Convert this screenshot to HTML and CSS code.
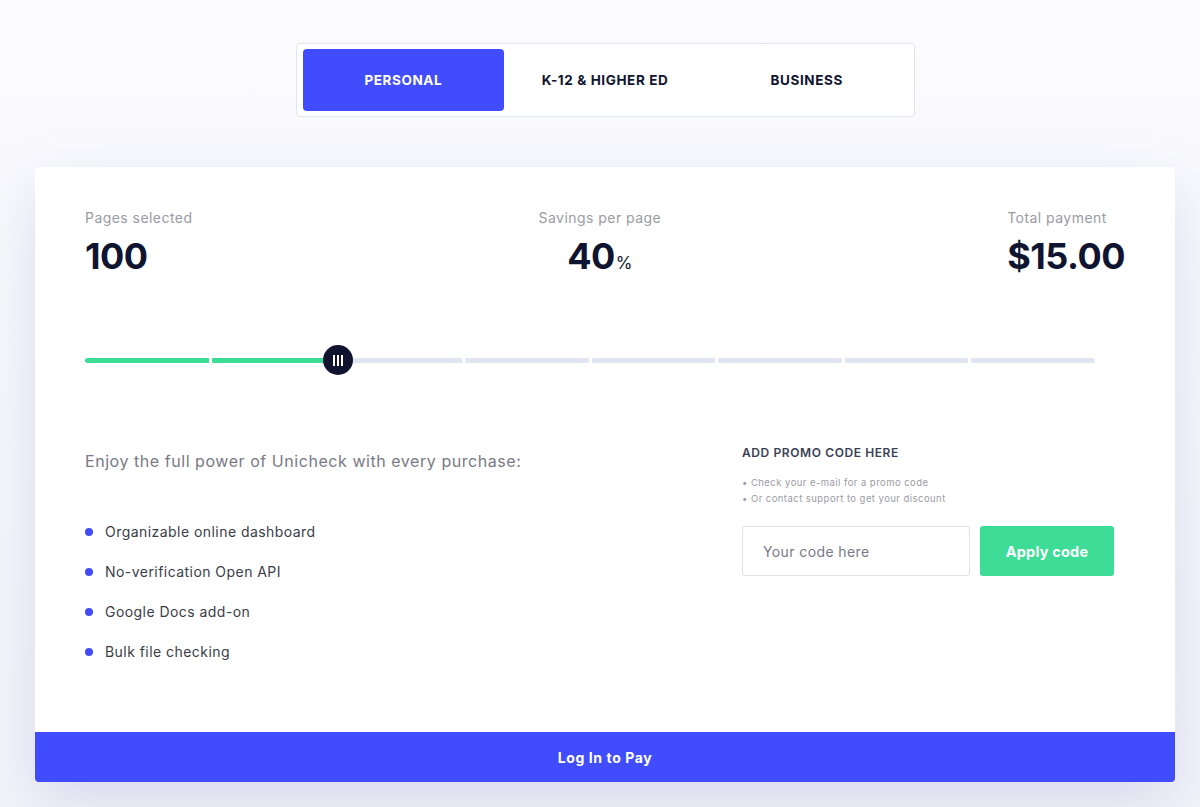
FILE: index.html
```html
<!DOCTYPE html>
<html lang="en">
<head>
<meta charset="utf-8">
<title>Pricing</title>
<link rel="stylesheet" href="styles.css">
</head>
<body>
<div class="page">
  <nav class="tabs">
    <button class="tab active">PERSONAL</button>
    <button class="tab">K-12 &amp; HIGHER ED</button>
    <button class="tab">BUSINESS</button>
  </nav>

  <section class="card">
    <div class="card-body">
      <div class="stats">
        <div class="stat">
          <div class="stat-label">Pages selected</div>
          <div class="stat-value">100</div>
        </div>
        <div class="stat stat-center">
          <div class="stat-label">Savings per page</div>
          <div class="stat-value">40<span class="pct">%</span></div>
        </div>
        <div class="stat">
          <div class="stat-label">Total payment</div>
          <div class="stat-value">$15.00</div>
        </div>
      </div>

      <div class="slider">
        <div class="seg on"></div>
        <div class="seg on"></div>
        <div class="seg"></div>
        <div class="seg"></div>
        <div class="seg"></div>
        <div class="seg"></div>
        <div class="seg"></div>
        <div class="seg"></div>
        <div class="thumb"><span></span><span></span><span></span></div>
      </div>

      <div class="lower">
        <div class="features">
          <p class="intro">Enjoy the full power of Unicheck with every purchase:</p>
          <ul class="feature-list">
            <li>Organizable online dashboard</li>
            <li>No-verification Open API</li>
            <li>Google Docs add-on</li>
            <li>Bulk file checking</li>
          </ul>
        </div>
        <div class="promo">
          <h3 class="promo-title">ADD PROMO CODE HERE</h3>
          <p class="promo-hint">• Check your e-mail for a promo code</p>
          <p class="promo-hint">• Or contact support to get your discount</p>
          <div class="promo-form">
            <input class="promo-input" type="text" placeholder="Your code here">
            <button class="promo-btn">Apply code</button>
          </div>
        </div>
      </div>
    </div>
    <button class="pay-btn">Log In to Pay</button>
  </section>
</div>
</body>
</html>
```

FILE: styles.css
```css
* { box-sizing: border-box; }

html, body {
  margin: 0;
  height: 100%;
}

body {
  font-family: "Inter", "Liberation Sans", sans-serif;
  background: linear-gradient(180deg, #fbfbfe 0%, #f3f4fa 100%);
  color: #10142f;
  overflow: hidden;
}

.page {
  padding: 43px 25px 0 35px;
  display: flex;
  flex-direction: column;
  align-items: center;
}

.tabs {
  display: flex;
  padding: 5px 6px;
  background: #fff;
  border: 1px solid #e2e4ee;
  border-radius: 4px;
  width: 619px;
}

.tab {
  flex: 1;
  height: 62px;
  border: 0;
  background: transparent;
  font-family: inherit;
  font-size: 13.5px;
  font-weight: 700;
  color: #10142f;
  border-radius: 4px;
  letter-spacing: 0.6px;
}

.tab.active {
  background: #414cff;
  color: #fff;
}

.card {
  margin-top: 50px;
  width: 1140px;
  background: #fff;
  border-radius: 4px;
  box-shadow: 0 20px 60px rgba(120, 125, 190, 0.22);
  display: flex;
  flex-direction: column;
}

.card-body {
  padding: 41px 50px 50px 50px;
}

.stats {
  display: flex;
  justify-content: space-between;
}

.stat-label {
  font-size: 14px;
  line-height: 20px;
  color: #9a9ba3;
  letter-spacing: 0.45px;
}

.stat-value {
  margin-top: 8px;
  font-size: 36px;
  line-height: 40px;
  font-weight: 700;
  color: #0f1430;
  letter-spacing: -0.5px;
}

.stat-center {
  text-align: center;
}

.pct {
  font-size: 17px;
  font-weight: 400;
  letter-spacing: 0;
  margin-left: 1px;
}

.slider {
  position: relative;
  margin-top: 75px;
  width: 1010px;
  height: 6px;
  display: flex;
  gap: 3px;
}

.seg {
  flex: 1;
  height: 5px;
  background: #e1e4f1;
  border-radius: 1px;
}

.seg:first-child {
  border-radius: 3px 1px 1px 3px;
}

.seg:nth-child(8) {
  border-radius: 1px 3px 3px 1px;
}

.seg.on {
  background: #3ddc97;
}

.thumb {
  position: absolute;
  left: 238px;
  top: -13px;
  width: 30px;
  height: 30px;
  border-radius: 50%;
  background: #10142f;
  display: flex;
  align-items: center;
  justify-content: center;
  gap: 2px;
}

.thumb span {
  width: 2px;
  height: 11px;
  background: #fff;
}

.lower {
  margin-top: 81px;
  display: flex;
}

.features {
  width: 657px;
}

.intro {
  margin: 4px 0 0 0;
  font-size: 16px;
  line-height: 24px;
  color: #787a85;
  letter-spacing: 0.55px;
}

.feature-list {
  list-style: none;
  margin: 49px 0 0 0;
  padding: 0;
}

.feature-list li {
  position: relative;
  padding-left: 20px;
  font-size: 14px;
  line-height: 20px;
  color: #3a3c48;
  margin-bottom: 20px;
  letter-spacing: 0.45px;
}

.feature-list li::before {
  content: "";
  position: absolute;
  left: 0;
  top: 6px;
  width: 8px;
  height: 8px;
  border-radius: 50%;
  background: #414cff;
}

.promo {
  width: 372px;
}

.promo-title {
  margin: 0 0 14px 0;
  font-size: 12px;
  line-height: 16px;
  font-weight: 600;
  color: #3b3f55;
  letter-spacing: 0.6px;
}

.promo-hint {
  margin: 0;
  font-size: 9.5px;
  line-height: 16px;
  color: #9a9ba3;
  letter-spacing: 0.45px;
}

.promo-form {
  margin-top: 19px;
  display: flex;
  gap: 10px;
}

.promo-input {
  width: 228px;
  height: 50px;
  border: 1px solid #dfe0e8;
  border-radius: 3px;
  padding: 0 20px;
  font-family: inherit;
  font-size: 14px;
  color: #333;
  outline: none;
  letter-spacing: 0.4px;
}

.promo-input::placeholder {
  color: #787a85;
}

.promo-btn {
  width: 134px;
  height: 50px;
  border: 0;
  border-radius: 3px;
  background: #3ddc97;
  color: #fff;
  font-family: inherit;
  font-size: 14.5px;
  font-weight: 700;
  letter-spacing: 0.2px;
}

.pay-btn {
  height: 50px;
  border: 0;
  border-radius: 0 0 4px 4px;
  background: #414cff;
  color: #fff;
  font-family: inherit;
  font-size: 14px;
  font-weight: 700;
  letter-spacing: 0.6px;
}
```
